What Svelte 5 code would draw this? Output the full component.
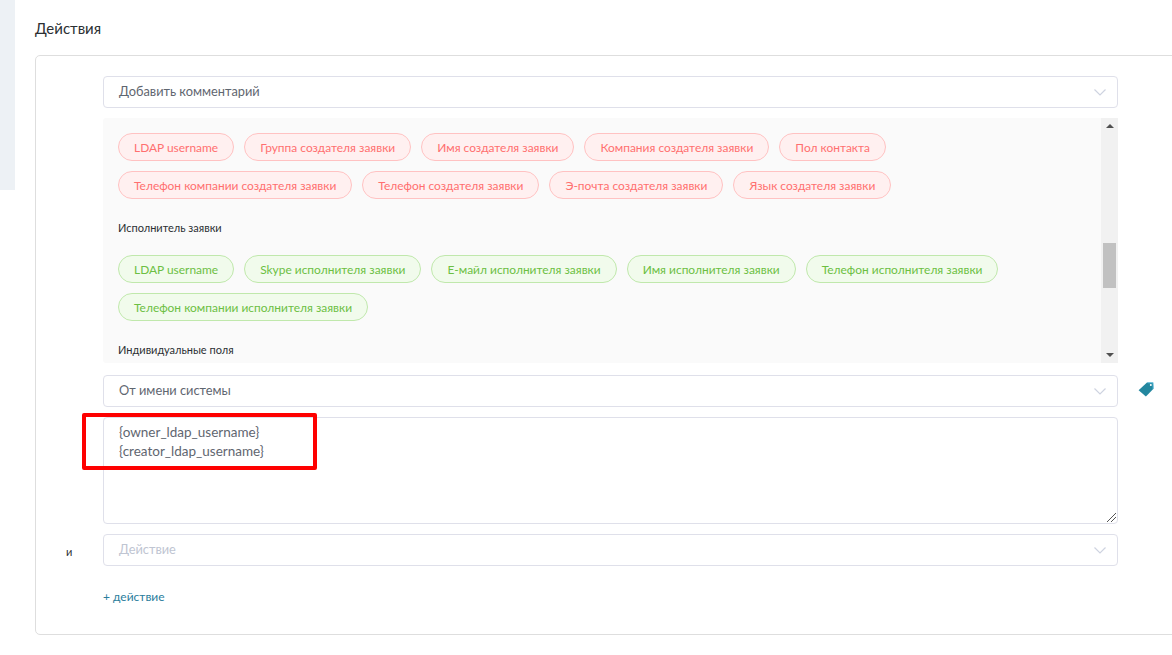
<script lang="ts">
	const creatorChips = [
		'LDAP username',
		'Группа создателя заявки',
		'Имя создателя заявки',
		'Компания создателя заявки',
		'Пол контакта',
		'Телефон компании создателя заявки',
		'Телефон создателя заявки',
		'Э-почта создателя заявки',
		'Язык создателя заявки'
	];
	const assigneeChips = [
		'LDAP username',
		'Skype исполнителя заявки',
		'Е-майл исполнителя заявки',
		'Имя исполнителя заявки',
		'Телефон исполнителя заявки',
		'Телефон компании исполнителя заявки'
	];
</script>

{#snippet chevron()}
	<svg class="chevron" width="12" height="7" viewBox="0 0 12 7" aria-hidden="true">
		<path d="M.5.5L6 6 11.500.5" fill="none" stroke="#ced3e0" stroke-width="1.2" />
	</svg>
{/snippet}

<div class="page">
	<aside class="stub"></aside>
	<main class="content">
		<h2>Действия</h2>
		<section class="panel">
			<div class="row">
				<div class="select">
					<span>Добавить комментарий</span>
					{@render chevron()}
				</div>
			</div>

			<div class="row vars-row">
				<div class="vars">
					<div class="vars-body">
						<div class="chips red">
							{#each creatorChips as chip}
								<span class="chip">{chip}</span>
							{/each}
						</div>
						<h4>Исполнитель заявки</h4>
						<div class="chips green">
							{#each assigneeChips as chip}
								<span class="chip">{chip}</span>
							{/each}
						</div>
						<h4>Индивидуальные поля</h4>
					</div>
					<div class="scrollbar">
						<svg class="arrow" width="8" height="4" viewBox="0 0 8 4"><path d="M4 0l4 4H0z" fill="#505050" /></svg>
						<div class="track"><div class="thumb"></div></div>
						<svg class="arrow" width="8" height="4" viewBox="0 0 8 4"><path d="M0 0h8L4 4z" fill="#505050" /></svg>
					</div>
				</div>
			</div>

			<div class="row">
				<div class="select">
					<span>От имени системы</span>
					{@render chevron()}
				</div>
				<svg class="tag" width="16" height="15" viewBox="0 0 16 15" aria-hidden="true">
					<path d="M9 .5h6.200l.3 6.200-7.600 7.800L.6 8.300z" fill="#23879f" />
					<path d="M15.200.5l.3 6.200-.8.8V1.300H9.800L9 .5z" fill="#5cc4ea" />
					<circle cx="12.800" cy="3" r="1" fill="#fff" />
				</svg>
			</div>

			<div class="row">
				<div class="textarea">
					<div>{'{owner_ldap_username}'}</div>
					<div>{'{creator_ldap_username}'}</div>
					<svg class="grip" width="9" height="9" viewBox="0 0 9 9" aria-hidden="true">
						<path d="M9 0L0 9M9 4L4 9" stroke="#555" stroke-width="1" fill="none" />
					</svg>
					<div class="highlight"></div>
				</div>
			</div>

			<div class="row and-row">
				<span class="and">и</span>
				<div class="select placeholder">
					<span>Действие</span>
					{@render chevron()}
				</div>
			</div>

			<a class="add" href="#add">+ действие</a>
		</section>
	</main>
</div>

<style>
	:global(body) {
		background: #fff;
		overflow: hidden;
	}

	.page {
		display: flex;
		width: 1172px;
		height: 655px;
		overflow: hidden;
		font-family: Lato, 'Noto Sans', sans-serif;
		font-size: 12.8px;
		color: #5f6670;
	}

	.stub {
		flex: none;
		width: 15px;
		height: 190px;
		background: #edf1f5;
	}

	.content {
		flex: none;
		width: 1157px;
		padding-left: 20px;
		box-sizing: border-box;
	}

	h2 {
		margin: 0;
		padding-top: 18px;
		height: 55px;
		box-sizing: border-box;
		font-size: 15px;
		line-height: 20px;
		font-weight: 400;
		color: #2b2f33;
	}

	.panel {
		box-sizing: border-box;
		width: 1200px;
		height: 580px;
		padding: 20px 0 0 67px;
		border: 1px solid #dedede;
		border-radius: 5px;
		display: flex;
		flex-direction: column;
	}

	.row {
		display: flex;
		align-items: center;
		gap: 20px;
		margin-bottom: 10px;
		position: relative;
	}

	.vars-row {
		margin-bottom: 12px;
	}

	.select {
		box-sizing: border-box;
		flex: none;
		width: 1015px;
		height: 32px;
		padding: 0 11px 0 15px;
		border: 1px solid #dfe0ea;
		border-radius: 4px;
		display: flex;
		align-items: center;
		justify-content: space-between;
	}

	.select span {
		padding-bottom: 2px;
	}

	.placeholder {
		color: #c0c5d2;
	}

	.vars {
		flex: none;
		width: 1015px;
		height: 245px;
		display: flex;
		background: #fafafa;
		border-radius: 3px 0 0 3px;
		overflow: hidden;
	}

	.vars-body {
		flex: 1;
		min-width: 0;
		padding: 15px 15px 0;
		overflow: hidden;
	}

	.chips {
		display: flex;
		flex-wrap: wrap;
		gap: 10px;
	}

	.chip {
		box-sizing: border-box;
		height: 28px;
		padding: 0 15px;
		border: 1px solid;
		border-radius: 14px;
		font-size: 11.95px;
		line-height: 27px;
		white-space: nowrap;
	}

	.red .chip {
		color: #ff6f6f;
		background: #fff0f0;
		border-color: #ffc2c2;
	}

	.green .chip {
		color: #6cbf43;
		background: #f1fbec;
		border-color: #c0e8ac;
	}

	h4 {
		margin: 21px 0 19px;
		font-size: 11px;
		line-height: 16px;
		font-weight: 400;
		color: #2b2f33;
	}

	.scrollbar {
		flex: none;
		width: 17px;
		background: #f1f1f1;
		display: flex;
		flex-direction: column;
		align-items: center;
	}

	.arrow {
		flex: none;
		margin: 6px 0;
	}

	.track {
		flex: 1;
		width: 100%;
	}

	.thumb {
		width: 13px;
		height: 45px;
		margin: 109px 0 0 2px;
		background: #c1c1c1;
	}

	.tag {
		flex: none;
		align-self: flex-start;
		margin-top: 7px;
	}

	.textarea {
		box-sizing: border-box;
		position: relative;
		flex: none;
		width: 1015px;
		height: 107px;
		padding: 5px 15px;
		border: 1px solid #dfe0ea;
		border-radius: 4px;
		font-size: 13.5px;
		line-height: 19px;
	}

	.grip {
		position: absolute;
		right: 1px;
		bottom: 1px;
	}

	.highlight {
		position: absolute;
		left: -22px;
		top: -5px;
		width: 235px;
		height: 57px;
		box-sizing: border-box;
		border: 4px solid #fe0000;
		border-radius: 2px;
	}

	.and {
		position: absolute;
		left: -37px;
		top: 11px;
		font-size: 11px;
		color: #2b2f33;
	}

	.add {
		margin-top: 12px;
		font-size: 12px;
		line-height: 18px;
		color: #2a7d9c;
		text-decoration: none;
	}
</style>
